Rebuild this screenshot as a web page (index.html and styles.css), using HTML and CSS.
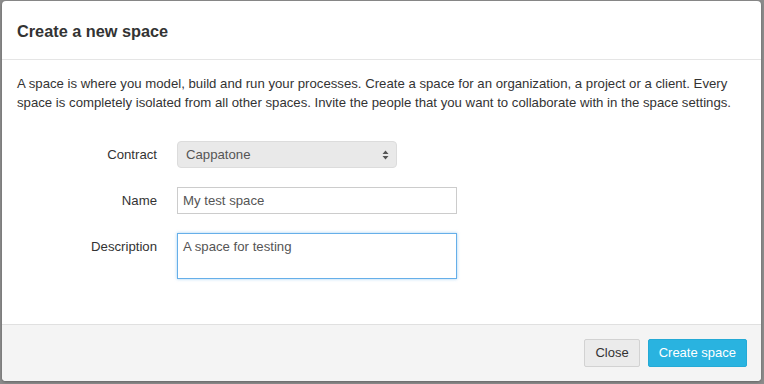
FILE: index.html
```html
<!DOCTYPE html>
<html>
<head>
<meta charset="utf-8">
<link rel="stylesheet" href="styles.css">
</head>
<body>
<div class="dialog">
  <div class="header"><h4 class="title">Create a new space</h4></div>
  <div class="body">
    <p class="intro">A space is where you model, build and run your processes. Create a space for an organization, a project or a client. Every space is completely isolated from all other spaces. Invite the people that you want to collaborate with in the space settings.</p>
    <div class="form">
      <label class="label">Contract</label>
      <div class="select">
        <span>Cappatone</span>
        <svg class="arrows" width="7" height="10" viewBox="0 0 7 10"><path d="M3.5 0.5 L6.5 4 L0.5 4 Z M0.5 6 L6.5 6 L3.5 9.5 Z" fill="#555"/></svg>
      </div>
      <label class="label">Name</label>
      <div class="input">My test space</div>
      <label class="label">Description</label>
      <div class="textarea">A space for testing</div>
    </div>
  </div>
  <div class="footer">
    <button class="btn btn-default">Close</button>
    <button class="btn btn-primary">Create space</button>
  </div>
</div>
</body>
</html>
```

FILE: styles.css
```css
html, body {
  margin: 0;
  padding: 0;
}
body {
  background: #8c8c8c;
  width: 764px;
  height: 384px;
  overflow: hidden;
  font-family: "Liberation Sans", Arial, Helvetica, sans-serif;
  color: #333;
}
.dialog {
  margin: 1px 3px 3px 2px;
  width: 759px;
  height: 380px;
  background: #fff;
  border-radius: 4px;
  display: flex;
  flex-direction: column;
  overflow: hidden;
  box-shadow: 0 1px 3px rgba(0,0,0,0.3);
}
.header {
  height: 58px;
  border-bottom: 1px solid #e5e5e5;
  padding: 0 15px;
  display: flex;
  align-items: center;
  box-sizing: content-box;
}
.title {
  margin: 0;
  font-size: 16.3px;
  font-weight: bold;
  color: #333;
  line-height: 20px;
  padding-top: 2px;
}
.body {
  flex: 1;
  padding: 15px 15px 0 15px;
}
.intro {
  margin: 0;
  font-size: 13.2px;
  line-height: 18.57px;
  color: #333;
}
.form {
  margin-top: 29px;
  display: grid;
  grid-template-columns: 140px auto;
  column-gap: 20px;
  row-gap: 19px;
  font-size: 13.2px;
}
.label {
  text-align: right;
  align-self: start;
  line-height: 27px;
  color: #333;
}
.select {
  width: 220px;
  height: 27px;
  box-sizing: border-box;
  background: #e9e9e9;
  border: 1px solid #dcdcdc;
  border-radius: 4px;
  display: flex;
  align-items: center;
  justify-content: space-between;
  padding: 0 7px 0 8px;
  color: #555;
}
.arrows {
  display: block;
}
.input {
  width: 280px;
  height: 27px;
  box-sizing: border-box;
  border: 1px solid #ccc;
  padding: 0 5px;
  line-height: 25px;
  color: #555;
}
.textarea {
  width: 280px;
  height: 46px;
  box-sizing: border-box;
  border: 1px solid #66afe9;
  box-shadow: 0 0 3px rgba(102,175,233,0.6);
  padding: 4px 5px;
  line-height: 18px;
  color: #555;
}
.footer {
  border-top: 1px solid #e0e0e0;
  background: #f4f4f4;
  display: flex;
  justify-content: flex-end;
  align-items: flex-start;
  padding: 14px 14px 0 0;
  box-sizing: border-box;
  height: 57px;
  gap: 8px;
}
.btn {
  font-family: "Liberation Sans", Arial, Helvetica, sans-serif;
  font-size: 13px;
  height: 28px;
  padding: 0 10px;
  border-radius: 2px;
  cursor: pointer;
  line-height: 26px;
}
.btn-default {
  background: #ebebeb;
  border: 1px solid #d2d2d2;
  color: #333;
}
.btn-primary {
  background: #29b3e0;
  border: 1px solid #24aad6;
  color: #fff;
}
```
